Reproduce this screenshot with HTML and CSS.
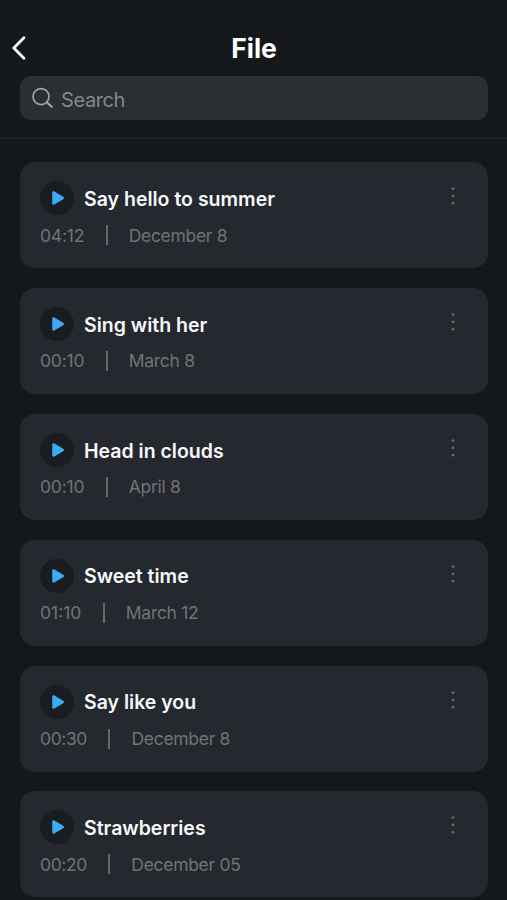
FILE: index.html
```html
<!DOCTYPE html>
<html lang="en">
<head>
<meta charset="utf-8">
<title>File</title>
<link rel="stylesheet" href="styles.css">
</head>
<body>
<svg width="0" height="0" class="defs" aria-hidden="true">
  <symbol id="play" viewBox="0 0 34 34"><path d="M12.8 11.2v11.4q0 1.2 1.1.6l9.3-5.4q1.1-.8 0-1.6l-9.3-5.5q-1.1-.6-1.1.5z" fill="#3fabf5" stroke="#3fabf5" stroke-width="1" stroke-linejoin="round"/></symbol>
  <symbol id="more" viewBox="0 0 6 20"><g fill="#65686c"><circle cx="3" cy="2.6" r="1.4"/><circle cx="3" cy="9.9" r="1.4"/><circle cx="3" cy="17.2" r="1.4"/></g></symbol>
</svg>
<header class="header">
  <div class="bar">
    <button class="back" aria-label="Back"><svg width="16" height="26" viewBox="0 0 16 26" fill="none" stroke="#fff" stroke-width="2.8" stroke-linecap="round" stroke-linejoin="round"><path d="M14 2.8 3.8 13 14 23.2"/></svg></button>
    <h1>File</h1>
  </div>
  <div class="search">
    <svg width="22" height="22" viewBox="0 0 22 22" fill="none" stroke="#a2a4a7" stroke-width="1.7" stroke-linecap="round"><circle cx="10" cy="9.6" r="8"/><path d="m15.8 15.3 4.9 4.5" stroke-width="2.2"/></svg>
    <span>Search</span>
  </div>
</header>
<main class="list">
  <article class="card">
    <div class="top"><svg class="play"><use href="#play"/></svg><h2>Say hello to summer</h2><svg class="more"><use href="#more"/></svg></div>
    <div class="meta"><span>04:12</span><i></i><span class="date">December 8</span></div>
  </article>
  <article class="card">
    <div class="top"><svg class="play"><use href="#play"/></svg><h2>Sing with her</h2><svg class="more"><use href="#more"/></svg></div>
    <div class="meta"><span>00:10</span><i></i><span class="date">March 8</span></div>
  </article>
  <article class="card">
    <div class="top"><svg class="play"><use href="#play"/></svg><h2>Head in clouds</h2><svg class="more"><use href="#more"/></svg></div>
    <div class="meta"><span>00:10</span><i></i><span class="date">April 8</span></div>
  </article>
  <article class="card">
    <div class="top"><svg class="play"><use href="#play"/></svg><h2>Sweet time</h2><svg class="more"><use href="#more"/></svg></div>
    <div class="meta"><span class="wide">01:10</span><i></i><span class="date">March 12</span></div>
  </article>
  <article class="card">
    <div class="top"><svg class="play"><use href="#play"/></svg><h2>Say like you</h2><svg class="more"><use href="#more"/></svg></div>
    <div class="meta"><span class="tight">00:30</span><i></i><span class="date">December 8</span></div>
  </article>
  <article class="card">
    <div class="top"><svg class="play"><use href="#play"/></svg><h2>Strawberries</h2><svg class="more"><use href="#more"/></svg></div>
    <div class="meta"><span class="tight">00:20</span><i></i><span class="date">December 05</span></div>
  </article>
</main>
</body>
</html>
```
FILE: styles.css
```css
* { box-sizing: border-box; }
body {
  margin: 0;
  height: 900px;
  overflow: hidden;
  background: #14171b;
  font-family: Inter, "Liberation Sans", sans-serif;
}
.defs { display: block; }
svg { flex: none; }
h1, h2 { margin: 0; }
.header {
  height: 139px;
  padding: 32px 19px 0 20px;
  border-bottom: 2px solid #1c1f23;
}
.bar {
  display: grid;
  grid-template-columns: 32px 1fr 32px;
  align-items: center;
  height: 32px;
  margin: 0 -10px 12px -10px;
}
.back {
  display: flex;
  padding: 0;
  border: 0;
  background: none;
}
h1 {
  color: #fff;
  font-size: 26.5px;
  line-height: 32px;
  font-weight: 700;
  text-align: center;
}
.search {
  display: flex;
  align-items: center;
  gap: 8px;
  height: 44px;
  padding: 0 11px;
  border-radius: 11px;
  background: #2b2e33;
  color: #85878a;
  font-size: 20px;
  letter-spacing: -.4px;
}
.search svg { margin-top: -1px; }
.search span { padding-top: 3px; }
.list {
  display: grid;
  gap: 19.9px;
  padding: 23px 19px 0 20px;
}
.card {
  height: 106px;
  padding: 19px 31px 0 20px;
  border-radius: 15px;
  background: #25282e;
}
.top {
  display: flex;
  align-items: center;
  height: 35px;
}
.play {
  width: 34px;
  height: 34px;
  margin-top: -1px;
  border-radius: 50%;
  background: #191c21;
}
h2 {
  flex: 1;
  margin-left: 10px;
  padding-top: .6px;
  color: #f7f8f9;
  font-size: 19.5px;
  line-height: 24px;
  font-weight: 600;
}
.more {
  width: 6px;
  height: 20px;
  margin: -5px 1px 0 -1px;
}
.meta {
  display: flex;
  align-items: center;
  height: 22px;
  margin-top: 8px;
  color: #717376;
  font-size: 17.5px;
  letter-spacing: -.2px;
}
.wide { letter-spacing: 0; }
.tight { letter-spacing: -.4px; }
.date { letter-spacing: -.3px; }
.meta i {
  width: 2px;
  height: 20px;
  margin: 0 21px 0 21.5px;
  background: #66686c;
}
```
